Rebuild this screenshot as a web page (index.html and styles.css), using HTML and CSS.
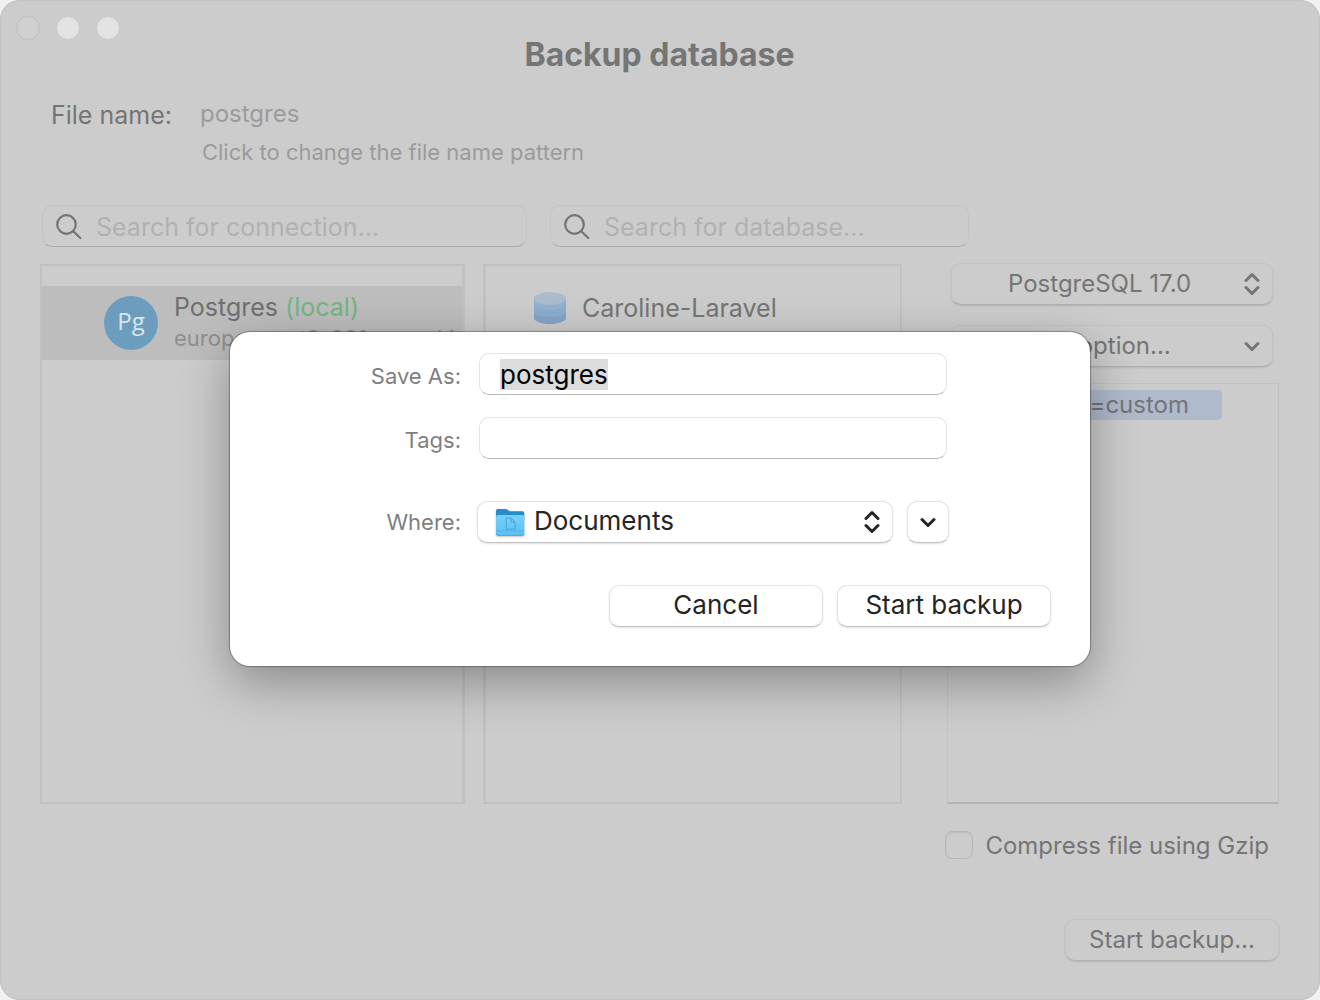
FILE: index.html
```html
<!DOCTYPE html>
<html lang="en">
<head>
  <meta charset="utf-8">
  <title>Backup database</title>
  <link rel="stylesheet" href="styles.css">
</head>
<body>
  <main class="window">
    <div class="window-controls">
      <span class="light light-off"></span>
      <span class="light"></span>
      <span class="light"></span>
    </div>
    <h1 class="title">Backup database</h1>

    <section class="file-name">
      <span class="file-label">File name:</span>
      <div class="file-info">
        <span class="file-value">postgres</span>
        <a class="file-hint" href="#">Click to change the file name pattern</a>
      </div>
    </section>

    <div class="search-row">
      <label class="search">
        <svg class="search-icon" viewBox="0 0 28 28" aria-hidden="true"><circle cx="11.500" cy="11.500" r="9.300"/><path d="M18.300 18.300 25.300 25"/></svg>
        <input class="search-input" type="text" placeholder="Search for connection..." aria-label="Search for connection">
      </label>
      <label class="search">
        <svg class="search-icon" viewBox="0 0 28 28" aria-hidden="true"><circle cx="11.500" cy="11.500" r="9.300"/><path d="M18.300 18.300 25.300 25"/></svg>
        <input class="search-input" type="text" placeholder="Search for database..." aria-label="Search for database">
      </label>
    </div>

    <div class="columns">
      <section class="panel panel-connections">
        <div class="connection">
          <span class="badge">Pg</span>
          <div class="connection-text">
            <span class="connection-name">Postgres <span class="tag">(local)</span></span>
            <span class="connection-host">europe-west2-001.proxy.ki</span>
          </div>
        </div>
      </section>

      <section class="panel panel-databases">
        <div class="database">
          <svg class="database-icon" viewBox="0 0 32 32" aria-hidden="true">
            <path d="M0 6v20c0 3.300 7.200 6 16 6s16-2.700 16-6V6z" fill="#84a5c8"/>
            <path d="M0 6v13c0 3.300 7.200 6 16 6s16-2.700 16-6V6z" fill="#8badd0"/>
            <path d="M0 6v6c0 3.300 7.200 6 16 6s16-2.700 16-6V6z" fill="#95b1ce"/>
            <ellipse cx="16" cy="6.500" rx="16" ry="6.500" fill="#abbccf"/>
          </svg>
          <span>Caroline-Laravel</span>
        </div>
      </section>

      <section class="options">
        <div class="select-box dim">
          <select class="select select-version" aria-label="Version"><option>PostgreSQL 17.0</option></select>
          <svg class="chevrons" viewBox="0 0 16 24" aria-hidden="true"><path d="M2 8.500 8 2.500l6 6M2 15.500l6 6 6-6"/></svg>
        </div>
        <div class="select-box dim">
          <select class="select select-option" aria-label="Option"><option>Add option...</option></select>
          <svg class="chevrons" viewBox="0 0 16 24" aria-hidden="true"><path d="M2 9.500l6 6 6-6"/></svg>
        </div>
        <div class="arguments"><span class="argument">--format=custom</span></div>
      </section>
    </div>

    <label class="compress">
      <input class="checkbox" type="checkbox">
      <span class="compress-text">Compress file using Gzip</span>
    </label>

    <footer class="footer">
      <button class="button button-dim" type="button">Start backup...</button>
    </footer>

    <dialog class="sheet" open>
      <form class="sheet-form">
        <label class="sheet-label" for="save-as">Save As:</label>
        <input class="field" id="save-as" type="text" value="postgres">
        <label class="sheet-label" for="tags">Tags:</label>
        <input class="field" id="tags" type="text">
        <label class="sheet-label sheet-label-where" for="where">Where:</label>
        <div class="where">
          <div class="select-box where-box">
            <select class="select select-where" id="where"><option>Documents</option></select>
            <svg class="folder" viewBox="0 0 30 28" aria-hidden="true">
              <defs><linearGradient id="folder-front" x1="0" y1="0" x2="0" y2="1"><stop offset="0" stop-color="#78d0fa"/><stop offset="1" stop-color="#5cc0f3"/></linearGradient></defs>
              <path d="M1 3q0-2 2-2h7.500q1 0 2 .8l1.500 1q.8.500 2 .5h11.500q1.700 0 1.700 1.700V12H1z" fill="#228dcb"/>
              <path d="M1 9q0-2 2-2h24.300q2 0 2 2v16.500q0 1.900-2 1.900H3q-2 0-2-1.900z" fill="url(#folder-front)"/>
              <path d="M1 22.800h28.300" stroke="#48aee5" stroke-width=".8"/>
              <path d="M1 26q.3 1.400 2 1.400h24.300q1.700 0 2-1.400" fill="none" stroke="#3fa0d4" stroke-width=".8"/>
              <path d="M11.200 10h4.800l4 4v7.200h-8.800zM16 10v4h4" fill="none" stroke="#3ea6de" stroke-width="1"/>
            </svg>
            <svg class="chevrons" viewBox="0 0 16 24" aria-hidden="true"><path d="M2 8.500 8 2.500l6 6M2 15.500l6 6 6-6"/></svg>
          </div>
          <button class="button expand" type="button" aria-label="Expand">
            <svg class="chevrons-inline" viewBox="0 0 16 24" aria-hidden="true"><path d="M2 9.500l6 6 6-6"/></svg>
          </button>
        </div>
      </form>
      <div class="sheet-actions">
        <button class="button" type="button">Cancel</button>
        <button class="button" type="button">Start backup</button>
      </div>
    </dialog>
  </main>
  <script src="script.js"></script>
</body>
</html>
```
FILE: styles.css
```css
* { box-sizing: border-box; }

body {
  margin: 0;
  background: #f1f1f1;
  font-family: Inter, "Liberation Sans", sans-serif;
  font-size: 25px;
  line-height: 32px;
  color: #757575;
}

input, select, button {
  margin: 0;
  font: inherit;
  color: inherit;
}

.window {
  position: relative;
  display: flex;
  flex-direction: column;
  min-height: 100vh;
  padding: 16px 41px 39px 40px;
  background: #cccccc;
  border-radius: 20px;
  box-shadow: inset 0 0 0 1px #c3c3c3;
}

.window-controls {
  display: flex;
  gap: 16px;
  height: 24px;
  margin-left: -24px;
}

.light {
  width: 24px;
  height: 24px;
  border: 1px solid #c8c8c8;
  border-radius: 50%;
  background: #e3e3e3;
}

.light-off {
  border-color: #bebebe;
  background: #d0d0d0;
}

.title {
  margin: 0;
  font-size: 32px;
  line-height: 30px;
  font-weight: 700;
  text-align: center;
}

.file-name {
  display: flex;
  gap: 28px;
  margin: 29px 0 0 11px;
}

.file-info {
  display: flex;
  flex-direction: column;
  gap: 8px;
  color: #9b9b9b;
}

.file-value {
  font-size: 24px;
  line-height: 30px;
}

.file-hint {
  padding-left: 2px;
  font-size: 22px;
  line-height: 30px;
  color: inherit;
  text-decoration: none;
}

.search-row {
  display: grid;
  grid-template-columns: minmax(0, 485fr) minmax(0, 419fr);
  gap: 23px;
  margin: 38px 310px 0 2px;
}

.search {
  display: flex;
  align-items: center;
  gap: 13px;
  height: 42px;
  padding: 2px 12px 0;
  border: 1px solid #c4c4c4;
  border-bottom-color: #ababab;
  border-radius: 10px;
}

.search-icon {
  flex: none;
  width: 28px;
  height: 28px;
  fill: none;
  stroke: #737373;
  stroke-width: 2.2;
  stroke-linecap: round;
}

.search-input {
  flex: 1;
  min-width: 0;
  padding: 0;
  border: 0;
  outline: 0;
  background: transparent;
}

.search-input::placeholder {
  color: #b1b1b1;
  opacity: 1;
}

.columns {
  display: grid;
  grid-template-columns: minmax(0, 425fr) minmax(0, 419fr) minmax(0, 359fr);
  column-gap: 18px;
  min-height: 540px;
  margin-top: 17px;
}

.panel {
  border: 2px solid #c1c1c1;
}

.panel-connections {
  padding-top: 20px;
  border-right-width: 3px;
}

.panel-databases {
  padding: 26px 48px;
  border-left-width: 3px;
}

.options {
  display: flex;
  flex-direction: column;
  margin-left: 27px;
}

.connection {
  display: flex;
  align-items: center;
  gap: 16px;
  height: 74px;
  padding: 0 6px 0 62px;
  background: #bdbdbd;
}

.badge {
  flex: none;
  width: 54px;
  height: 54px;
  border-radius: 50%;
  background: #6c9dbe;
  color: #dce6ec;
  font-family: "Open Sans", sans-serif;
  font-size: 24px;
  font-weight: 500;
  line-height: 50px;
  text-align: center;
}

.connection-text {
  display: flex;
  flex-direction: column;
  min-width: 0;
  padding-bottom: 2px;
}

.connection-name { color: #707070; }
.tag { color: #73b680; }

.connection-host {
  font-size: 22px;
  line-height: 30px;
  white-space: nowrap;
  color: #8f8f8f;
}

.database {
  display: flex;
  align-items: center;
  gap: 16px;
}

.database-icon {
  width: 32px;
  height: 32px;
}

.select-box {
  position: relative;
  height: 42px;
}

.dim {
  margin: 0 6px 20px 4px;
  font-size: 24px;
}

.dim:first-child { margin-top: -1px; }

.select {
  width: 100%;
  height: 42px;
  padding: 0 54px 2px 56px;
  border: 1px solid #e2e2e2;
  border-bottom-color: #c2c2c2;
  border-radius: 10px;
  outline: 0;
  appearance: none;
  background: #ffffff;
  box-shadow: 0 1px 2px rgba(0, 0, 0, 0.12);
}

.dim .select {
  padding-bottom: 0;
  border-color: #c3c3c3;
  border-bottom-color: #b0b0b0;
  background: #cccccc;
}

.dim .select-option { padding-left: 74px; }

.chevrons {
  position: absolute;
  top: 9px;
  right: 13px;
}

.chevrons, .chevrons-inline {
  width: 16px;
  height: 24px;
  fill: none;
  stroke: currentColor;
  stroke-width: 3;
  stroke-linecap: round;
  stroke-linejoin: round;
  pointer-events: none;
}

.arguments {
  flex: 1;
  margin-top: -4px;
  padding: 6px;
  border: 1px solid #c2c2c2;
  border-bottom: 2px solid #b3b3b3;
}

.argument {
  display: block;
  width: 268px;
  max-width: 100%;
  padding-right: 33px;
  border-radius: 4px;
  background: #afbacc;
  font-size: 24px;
  line-height: 30px;
  text-align: right;
}

.compress {
  display: flex;
  align-items: center;
  align-self: flex-end;
  gap: 12px;
  margin: 24px 10px 0 0;
  font-size: 24px;
}

.compress-text { padding-top: 2px; }

.checkbox {
  width: 28px;
  height: 28px;
  border: 1px solid #b7b7b7;
  border-radius: 7px;
  appearance: none;
  box-shadow: inset 0 1px 2px rgba(0, 0, 0, 0.08);
}

.footer {
  display: flex;
  justify-content: flex-end;
  margin-top: auto;
}

.button {
  display: flex;
  align-items: center;
  justify-content: center;
  width: 214px;
  height: 42px;
  padding: 0 0 2px;
  border: 1px solid #e2e2e2;
  border-bottom-color: #c2c2c2;
  border-radius: 10px;
  background: #ffffff;
  box-shadow: 0 1px 2px rgba(0, 0, 0, 0.12);
}

.button-dim {
  padding: 0;
  border-color: #c3c3c3;
  border-bottom-color: #b3b3b3;
  background: #cccccc;
  font-size: 24px;
}

.sheet {
  position: absolute;
  top: 332px;
  right: 0;
  left: 0;
  width: 860px;
  max-width: 100%;
  margin: 0 auto;
  padding: 21px 39px 39px 0;
  border: 0;
  border-radius: 20px;
  background: #ffffff;
  box-shadow: 0 0 1px 1px rgba(0, 0, 0, 0.3), 0 16px 50px rgba(0, 0, 0, 0.33);
  font-size: 26px;
  color: #242424;
}

.sheet-form {
  display: grid;
  grid-template-columns: 231px 468px;
  column-gap: 18px;
  row-gap: 22px;
}

.sheet-label {
  padding-top: 7px;
  font-size: 22px;
  text-align: right;
  color: #7f7f7f;
}

.sheet-label-where { padding-top: 25px; }

.field {
  width: 100%;
  height: 42px;
  padding: 0 20px;
  border: 1px solid #e4e4e4;
  border-bottom-color: #bcbcbc;
  border-radius: 10px;
  outline: 0;
  background: #ffffff;
  color: #000000;
}

.field::selection {
  background: #dcdcdc;
  color: #000000;
}

.where {
  display: flex;
  gap: 14px;
  padding-top: 20px;
  margin: 0 -2px;
}

.where-box { flex: 1; }

.folder {
  position: absolute;
  top: 7px;
  left: 18px;
  width: 30px;
  height: 28px;
  filter: drop-shadow(0 1px 1px rgba(0, 0, 0, 0.25));
  pointer-events: none;
}

.expand { width: 42px; padding: 0; }

.sheet-actions {
  display: flex;
  justify-content: flex-end;
  gap: 14px;
  margin-top: 42px;
}
```
FILE: script.js
```js
const saveAs = document.getElementById("save-as");
saveAs.focus();
saveAs.select();
```
